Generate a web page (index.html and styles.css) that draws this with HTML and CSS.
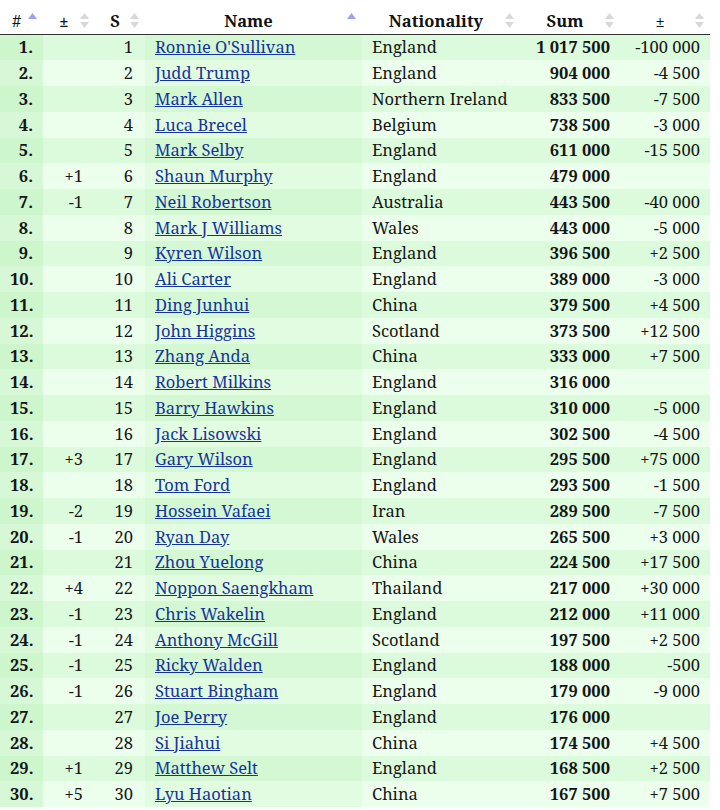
FILE: index.html
```html
<!DOCTYPE html>
<html lang="en">
<head>
<meta charset="utf-8">
<title>Ranking</title>
<link rel="stylesheet" href="styles.css">
</head>
<body>
<table class="rank">
  <colgroup>
    <col class="c-pos"><col class="c-chg"><col class="c-s"><col class="c-name"><col class="c-nat"><col class="c-sum"><col class="c-diff">
  </colgroup>
  <thead>
    <tr>
      <th class="h-pos">#<span class="sort"><svg width="9" height="15" viewBox="0 0 9 15"><polygon class="on" points="0,6 4.5,0 9,6"/></svg></span></th>
      <th>±<span class="sort"><svg width="9" height="15" viewBox="0 0 9 15"><polygon points="0,6 4.5,0 9,6"/><polygon points="0,9 4.5,15 9,9"/></svg></span></th>
      <th>S<span class="sort"><svg width="9" height="15" viewBox="0 0 9 15"><polygon points="0,6 4.5,0 9,6"/><polygon points="0,9 4.5,15 9,9"/></svg></span></th>
      <th>Name<span class="sort"><svg width="9" height="15" viewBox="0 0 9 15"><polygon class="on" points="0,6 4.5,0 9,6"/></svg></span></th>
      <th>Nationality<span class="sort"><svg width="9" height="15" viewBox="0 0 9 15"><polygon points="0,6 4.5,0 9,6"/><polygon points="0,9 4.5,15 9,9"/></svg></span></th>
      <th>Sum<span class="sort"><svg width="9" height="15" viewBox="0 0 9 15"><polygon points="0,6 4.5,0 9,6"/><polygon points="0,9 4.5,15 9,9"/></svg></span></th>
      <th class="h-diff">±<span class="sort"><svg width="9" height="15" viewBox="0 0 9 15"><polygon points="0,6 4.5,0 9,6"/><polygon points="0,9 4.5,15 9,9"/></svg></span></th>
    </tr>
  </thead>
  <tbody>
    <tr><td class="pos">1.</td><td class="chg"></td><td class="s">1</td><td class="name"><a href="#">Ronnie O'Sullivan</a></td><td>England</td><td class="sum">1 017 500</td><td class="diff">-100 000</td></tr>
    <tr><td class="pos">2.</td><td class="chg"></td><td class="s">2</td><td class="name"><a href="#">Judd Trump</a></td><td>England</td><td class="sum">904 000</td><td class="diff">-4 500</td></tr>
    <tr><td class="pos">3.</td><td class="chg"></td><td class="s">3</td><td class="name"><a href="#">Mark Allen</a></td><td>Northern Ireland</td><td class="sum">833 500</td><td class="diff">-7 500</td></tr>
    <tr><td class="pos">4.</td><td class="chg"></td><td class="s">4</td><td class="name"><a href="#">Luca Brecel</a></td><td>Belgium</td><td class="sum">738 500</td><td class="diff">-3 000</td></tr>
    <tr><td class="pos">5.</td><td class="chg"></td><td class="s">5</td><td class="name"><a href="#">Mark Selby</a></td><td>England</td><td class="sum">611 000</td><td class="diff">-15 500</td></tr>
    <tr><td class="pos">6.</td><td class="chg">+1</td><td class="s">6</td><td class="name"><a href="#">Shaun Murphy</a></td><td>England</td><td class="sum">479 000</td><td class="diff"></td></tr>
    <tr><td class="pos">7.</td><td class="chg">-1</td><td class="s">7</td><td class="name"><a href="#">Neil Robertson</a></td><td>Australia</td><td class="sum">443 500</td><td class="diff">-40 000</td></tr>
    <tr><td class="pos">8.</td><td class="chg"></td><td class="s">8</td><td class="name"><a href="#">Mark J Williams</a></td><td>Wales</td><td class="sum">443 000</td><td class="diff">-5 000</td></tr>
    <tr><td class="pos">9.</td><td class="chg"></td><td class="s">9</td><td class="name"><a href="#">Kyren Wilson</a></td><td>England</td><td class="sum">396 500</td><td class="diff">+2 500</td></tr>
    <tr><td class="pos">10.</td><td class="chg"></td><td class="s">10</td><td class="name"><a href="#">Ali Carter</a></td><td>England</td><td class="sum">389 000</td><td class="diff">-3 000</td></tr>
    <tr><td class="pos">11.</td><td class="chg"></td><td class="s">11</td><td class="name"><a href="#">Ding Junhui</a></td><td>China</td><td class="sum">379 500</td><td class="diff">+4 500</td></tr>
    <tr><td class="pos">12.</td><td class="chg"></td><td class="s">12</td><td class="name"><a href="#">John Higgins</a></td><td>Scotland</td><td class="sum">373 500</td><td class="diff">+12 500</td></tr>
    <tr><td class="pos">13.</td><td class="chg"></td><td class="s">13</td><td class="name"><a href="#">Zhang Anda</a></td><td>China</td><td class="sum">333 000</td><td class="diff">+7 500</td></tr>
    <tr><td class="pos">14.</td><td class="chg"></td><td class="s">14</td><td class="name"><a href="#">Robert Milkins</a></td><td>England</td><td class="sum">316 000</td><td class="diff"></td></tr>
    <tr><td class="pos">15.</td><td class="chg"></td><td class="s">15</td><td class="name"><a href="#">Barry Hawkins</a></td><td>England</td><td class="sum">310 000</td><td class="diff">-5 000</td></tr>
    <tr><td class="pos">16.</td><td class="chg"></td><td class="s">16</td><td class="name"><a href="#">Jack Lisowski</a></td><td>England</td><td class="sum">302 500</td><td class="diff">-4 500</td></tr>
    <tr><td class="pos">17.</td><td class="chg">+3</td><td class="s">17</td><td class="name"><a href="#">Gary Wilson</a></td><td>England</td><td class="sum">295 500</td><td class="diff">+75 000</td></tr>
    <tr><td class="pos">18.</td><td class="chg"></td><td class="s">18</td><td class="name"><a href="#">Tom Ford</a></td><td>England</td><td class="sum">293 500</td><td class="diff">-1 500</td></tr>
    <tr><td class="pos">19.</td><td class="chg">-2</td><td class="s">19</td><td class="name"><a href="#">Hossein Vafaei</a></td><td>Iran</td><td class="sum">289 500</td><td class="diff">-7 500</td></tr>
    <tr><td class="pos">20.</td><td class="chg">-1</td><td class="s">20</td><td class="name"><a href="#">Ryan Day</a></td><td>Wales</td><td class="sum">265 500</td><td class="diff">+3 000</td></tr>
    <tr><td class="pos">21.</td><td class="chg"></td><td class="s">21</td><td class="name"><a href="#">Zhou Yuelong</a></td><td>China</td><td class="sum">224 500</td><td class="diff">+17 500</td></tr>
    <tr><td class="pos">22.</td><td class="chg">+4</td><td class="s">22</td><td class="name"><a href="#">Noppon Saengkham</a></td><td>Thailand</td><td class="sum">217 000</td><td class="diff">+30 000</td></tr>
    <tr><td class="pos">23.</td><td class="chg">-1</td><td class="s">23</td><td class="name"><a href="#">Chris Wakelin</a></td><td>England</td><td class="sum">212 000</td><td class="diff">+11 000</td></tr>
    <tr><td class="pos">24.</td><td class="chg">-1</td><td class="s">24</td><td class="name"><a href="#">Anthony McGill</a></td><td>Scotland</td><td class="sum">197 500</td><td class="diff">+2 500</td></tr>
    <tr><td class="pos">25.</td><td class="chg">-1</td><td class="s">25</td><td class="name"><a href="#">Ricky Walden</a></td><td>England</td><td class="sum">188 000</td><td class="diff">-500</td></tr>
    <tr><td class="pos">26.</td><td class="chg">-1</td><td class="s">26</td><td class="name"><a href="#">Stuart Bingham</a></td><td>England</td><td class="sum">179 000</td><td class="diff">-9 000</td></tr>
    <tr><td class="pos">27.</td><td class="chg"></td><td class="s">27</td><td class="name"><a href="#">Joe Perry</a></td><td>England</td><td class="sum">176 000</td><td class="diff"></td></tr>
    <tr><td class="pos">28.</td><td class="chg"></td><td class="s">28</td><td class="name"><a href="#">Si Jiahui</a></td><td>China</td><td class="sum">174 500</td><td class="diff">+4 500</td></tr>
    <tr><td class="pos">29.</td><td class="chg">+1</td><td class="s">29</td><td class="name"><a href="#">Matthew Selt</a></td><td>England</td><td class="sum">168 500</td><td class="diff">+2 500</td></tr>
    <tr><td class="pos">30.</td><td class="chg">+5</td><td class="s">30</td><td class="name"><a href="#">Lyu Haotian</a></td><td>China</td><td class="sum">167 500</td><td class="diff">+7 500</td></tr>
  </tbody>
</table>
</body>
</html>
```
FILE: styles.css
```css
html, body {
  margin: 0;
  padding: 0;
  background: #ffffff;
}

body {
  font-family: "Noto Serif", "DejaVu Serif", serif;
  font-size: 16.5px;
  color: #151515;
}

.rank {
  width: 710px;
  table-layout: fixed;
  border-collapse: collapse;
}

.c-pos { width: 43px; }
.c-chg { width: 52px; }
.c-s { width: 50px; }
.c-name { width: 217px; }
.c-nat { width: 158px; }
.c-sum { width: 100px; }
.c-diff { width: 90px; }

.rank th {
  position: relative;
  height: 34px;
  padding: 0 15px 3px 5px;
  box-sizing: border-box;
  text-align: center;
  vertical-align: bottom;
  font-weight: bold;
  line-height: 20px;
  color: #111111;
  border-bottom: 1px solid #333333;
}

.rank th.h-pos,
.rank th.h-diff {
  font-weight: normal;
}

.sort {
  position: absolute;
  right: 6px;
  top: 13px;
  width: 9px;
  height: 15px;
  line-height: 0;
}

.sort polygon {
  fill: #d8d8d8;
}

.sort polygon.on {
  fill: #9f9ff0;
}

.rank td {
  height: 25.76px;
  padding: 0 10px;
  line-height: 20px;
  vertical-align: middle;
  white-space: nowrap;
  background: #dcfbdc;
}

.rank tbody tr:nth-child(even) td {
  background: #ecfeec;
}

.rank tbody tr:nth-child(odd) td.pos {
  background: #cdf6cd;
}

.rank tbody tr:nth-child(even) td.pos {
  background: #d7f8d7;
}

.rank tbody tr:nth-child(odd) td.name {
  background: #d3f8d3;
}

.rank tbody tr:nth-child(even) td.name {
  background: #e2fce2;
}

.pos {
  text-align: right;
  font-weight: bold;
}

.rank td.chg,
.rank td.s {
  text-align: right;
  padding-right: 12px;
}

.sum {
  text-align: right;
  font-weight: bold;
}

.diff {
  text-align: right;
}

.name a {
  color: #16339a;
  text-decoration: underline;
}
```
